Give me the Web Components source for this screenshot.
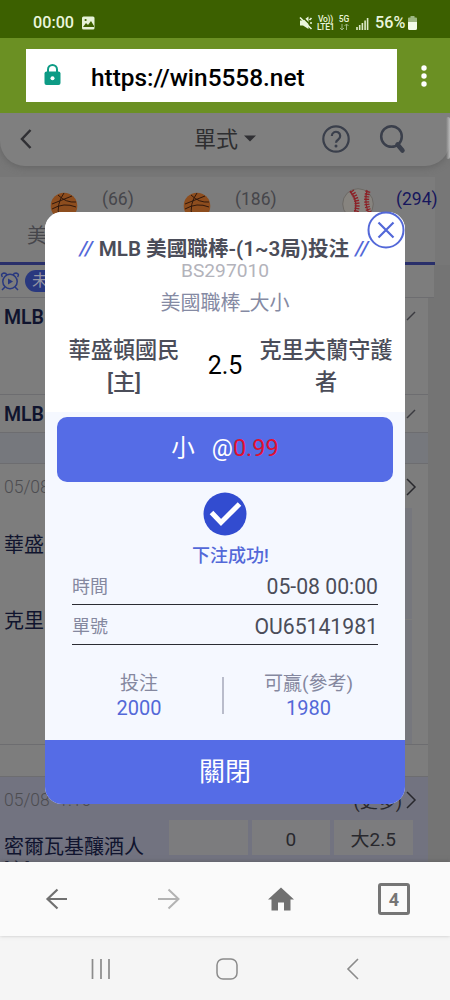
<!DOCTYPE html>
<html lang="zh-Hant">
<head>
<meta charset="utf-8">
<title>win5558</title>
<style>
html,body{margin:0;padding:0}
body{width:450px;height:1000px;overflow:hidden;font-family:Roboto,"Noto Sans CJK TC",sans-serif;background:#f5f5f5}
</style>
</head>
<body>
<phone-screen></phone-screen>
<script>
const base = '*{box-sizing:border-box}svg{display:block;flex:none}';
function define(name, css, html) {
  customElements.define(name, class extends HTMLElement {
    connectedCallback() {
      if (this.shadowRoot) return;
      const t = document.createElement('template');
      t.innerHTML = '<style>' + base + css + '</style>' + html;
      this.attachShadow({mode: 'open'}).append(t.content.cloneNode(true));
    }
  });
}

define('status-bar', `
:host{display:flex;align-items:center;height:38px;padding:8px 33px 0 33px;background:#3c6000;color:#eaf5dc;font-weight:500;font-size:16.2px;line-height:20px;white-space:nowrap}
.time{width:48px}
.right{margin-left:auto;display:flex;align-items:center}
.tiny{font-size:8.5px;line-height:8.5px;text-align:center;font-weight:500}
`, `
<span class="time">00:00</span>
<svg width="14" height="14" viewBox="0 0 14 14"><rect x="1" y=".5" width="12.5" height="13" rx="1.5" fill="#e6f2d8"/><path d="M2 11l3-4 2 2 3-4 3 5v1z" fill="#3c6000"/><circle cx="4.6" cy="4" r="1.1" fill="#3c6000"/></svg>
<div class="right">
<svg width="14" height="14" viewBox="0 0 14 14" style="margin-right:4px"><path d="M1 4.500h3L9.500 .5v12.500L4 9.500H1z" fill="#eaf5dc"/><path d="M2.500 0L14 11.500" stroke="#3c6000" stroke-width="1.600"/><path d="M1 1.500L12.500 13M10.500 4l2-2M11 7H13" stroke="#eaf5dc" stroke-width="1.600"/></svg>
<div class="tiny" style="width:17px;margin-right:4px;letter-spacing:-.3px">Vo))<br>LTE1</div>
<div class="tiny" style="width:12px;margin-right:6px;font-size:8.5px">5G<svg width="12" height="8" viewBox="0 0 12 8"><path d="M4 1v6M2 5l2 2 2-2M8.500 7V1M6.500 3l2-2 2 2" fill="none" stroke="#9eb784" stroke-width="1"/></svg></div>
<svg width="13" height="13" viewBox="0 0 13 13" style="margin-right:6px"><path d="M1 13V10M3.700 13V8M6.400 13V6" stroke="#dcebc9" stroke-width="1.6"/><path d="M9.100 13V3.500M11.600 13V1" stroke="#dcebc9" stroke-width="1.6"/></svg>
<span style="width:30px;margin-right:3px;font-size:16.200px">56%</span>
<svg width="9" height="14" viewBox="0 0 9 14"><path d="M2.500 0h4v1.500H8a1 1 0 0 1 1 1V7H0V2.500a1 1 0 0 1 1-1h1.500z" fill="#9db681"/><path d="M0 6h9v6.500a1.500 1.500 0 0 1-1.500 1.500h-6A1.500 1.500 0 0 1 0 12.500z" fill="#f2fae8"/></svg>
</div>`);

define('address-bar', `
:host{display:flex;align-items:flex-start;height:75px;padding:10.500px 0 0 26px;background:#6b9023}
.box{display:flex;align-items:center;width:371px;height:53.500px;background:#fff;padding-left:18px;font-size:24.400px;font-weight:500;color:#000;white-space:nowrap}
.u{margin-left:30px;padding-top:5px;line-height:30px}
.m{margin:16px 0 0 21px}
`, `
<div class="box"><svg width="17" height="22" viewBox="0 0 17 22"><path d="M4 9V5.500a4.500 4.500 0 0 1 9 0V9" fill="none" stroke="#0d9b85" stroke-width="2"/><rect x=".5" y="7.500" width="16" height="13.500" rx="2" fill="#0d9b85"/><circle cx="8.500" cy="14.300" r="2" fill="#fff"/></svg><span class="u">https://win5558.net</span></div>
<svg class="m" width="12" height="24" viewBox="0 0 12 24"><g fill="#fff"><circle cx="6" cy="3" r="2.700"/><circle cx="6" cy="11" r="2.700"/><circle cx="6" cy="19" r="2.700"/></g></svg>`);

define('page-header', `
:host{display:flex;flex:none;position:relative;align-items:center;height:53px;padding:0 0 2px 19px;background:#7f7f7f;border-radius:0 0 25px 25px;box-shadow:0 2px 6px #666;color:#2e2e30;font-size:22px;white-space:nowrap}
:host::after{content:"";position:absolute;right:0;top:4px;width:4px;height:42px;background:linear-gradient(90deg,#aaa0,#bbb);border-radius:2px}
.t{margin-left:161px;width:45px;line-height:30px;padding-top:2px;flex:none}
`, `
<svg width="14" height="22" viewBox="0 0 14 22"><path d="M11.500 2L3 11l8.500 9" fill="none" stroke="#303034" stroke-width="2.500"/></svg>
<span class="t">單式</span>
<svg width="18" height="10" viewBox="0 0 18 10"><path d="M5 1.500h12l-6 6z" fill="#303034"/></svg>
<svg style="margin-left:64px" width="30" height="30" viewBox="0 0 30 30"><circle cx="15" cy="15" r="12.700" fill="none" stroke="#3a3f4b" stroke-width="2.200"/><path d="M10.800 12a4.200 4.200 0 1 1 6.500 3.500Q15 17 15 18.800" fill="none" stroke="#3a3f4b" stroke-width="2.200"/><circle cx="15" cy="22" r="1.500" fill="#3a3f4b"/></svg>
<svg style="margin-left:28px" width="28" height="30" viewBox="0 0 28 30"><circle cx="12.500" cy="12.500" r="10.300" fill="none" stroke="#3a3f4b" stroke-width="2.500"/><path d="M18.500 20.500l5 6" stroke="#3a3f4b" stroke-width="4.500" stroke-linecap="round"/></svg>`);

const ball = '<svg width="28" height="28" viewBox="0 0 28 28"><circle cx="14" cy="14" r="13.300" fill="#8d4d1e"/><path d="M2 12Q12 8 22 4M8 3Q16 11 26 10M14 1Q6 12 9 25M2 17Q14 10 26 15" fill="none" stroke="#30180c" stroke-width="1"/></svg>';
define('svg-ball', ':host{display:block;width:28px;margin-top:3px;flex:none}', ball);
define('sport-tabs', `
:host{display:block;flex:none;width:435px;height:88px;margin-top:11px;background:#7c7c7c;border-bottom:3px solid #292f6a;padding-top:12px;color:#46464b}
.r{display:flex;height:38px;font-size:17.500px;line-height:20px;padding-left:50px}
.c{padding-left:24px;flex:none}
.l{font-size:20px;line-height:24px;padding:0 0 0 27px;margin-top:-3px}
`, `
<div class="r"><svg-ball></svg-ball><span class="c" style="width:105px">(66)</span><svg-ball></svg-ball><span class="c" style="width:131px">(186)</span>
<svg style="margin-top:-1px" width="32" height="32" viewBox="0 0 32 32"><circle cx="16" cy="16" r="15.300" fill="#87847f" stroke="#6c6965"/><path d="M8 3Q18 15 11 28M25 2Q22 15 27 26" fill="none" stroke="#842228" stroke-width="1.200"/><path d="M9.500 3Q19 15 12.500 28M26 3Q22.500 15 28 26" fill="none" stroke="#8e2026" stroke-width="5" stroke-dasharray="1.300 1.300"/></svg>
<span style="color:#16165c;padding-left:22px">(294)</span></div>
<div class="l">美</div>`);

define('match-list', `
:host{display:block;flex:1;color:#10142e;background:#747474;width:450px}
.w{width:428px;background:#7d7d7d}
.row{display:flex;align-items:center;padding-left:4px;border-bottom:1px solid #6d6d70}
b{font-weight:600;font-size:19.500px;line-height:24px}
.d{color:#4c4c50;font-size:17.500px;font-weight:300}
.pill{width:90px;height:22px;border-radius:11px;background:#29387f;color:#9494a2;font-size:16px;line-height:22px;padding-left:7px;margin-left:4px}
.k{margin-left:auto;margin-right:10px}
.n{font-size:20px;line-height:28px;padding-left:4px}
.cells{display:flex;gap:4px;margin-left:24px}
.cells span{width:78.500px;height:35px;background:#7c7c7e;text-align:center;line-height:39px;font-size:19px;color:#28282d}
`, `
<div class="w row" style="height:33px;padding-left:0;width:434px">
<svg width="21" height="22" viewBox="0 0 21 22"><g fill="none" stroke="#29387f" stroke-width="1.500"><circle cx="10" cy="11.500" r="7.200"/><path d="M2.500 7Q0 4 4 3q2 0 3 2M17.500 7Q20 4 16 3q-2 0-3 2M5 17l-3 3M15 17l3 3"/></g><path d="M8 8.500l5 3-5 3z" fill="#29387f"/></svg>
<span class="pill">未</span></div>
<div class="w row" style="height:97px;align-items:flex-start;padding-top:8px"><b>MLB</b><svg class="k" style="margin-top:5px" width="14" height="12" viewBox="0 0 14 12"><path d="M3 9L11 1" stroke="#3b3b40" stroke-width="1.500"/></svg></div>
<div class="w row" style="height:38px;padding-top:2px"><b>MLB</b><svg class="k" width="14" height="12" viewBox="0 0 14 12"><path d="M3 9L11 1" stroke="#3b3b40" stroke-width="1.500"/></svg></div>
<div class="w row" style="height:31px;background:#76787d"></div>
<div class="w" style="height:281px;border-bottom:1px solid #6d6d70">
<div style="display:flex;align-items:center;height:44px;padding:2px 0 0 4px"><span class="d">05/08</span><svg class="k" width="14" height="18" viewBox="0 0 14 18"><path d="M3 1l8 8-8 8" fill="none" stroke="#28282d" stroke-width="1.500"/></svg></div>
<div style="display:flex"><div style="width:401px"><div class="n" style="padding-top:23px">華盛</div><div class="n" style="padding-top:48px">克里</div></div><div style="width:11px"><div style="height:111px;background:#76777d"></div><div style="height:124px;margin-top:1px;background:#76777d"></div></div></div>
</div>
<div class="w row" style="height:32px"></div>
<div class="w" style="height:85px;background:#727380;overflow:hidden">
<div style="display:flex;align-items:center;height:43px;padding:3px 0 0 4px"><span class="d">05/08&nbsp; 1:10</span><span style="margin-left:auto;font-size:18px;color:#28282d">(更多)</span><svg style="margin:0 10px 0 2px" width="14" height="18" viewBox="0 0 14 18"><path d="M3 1l8 8-8 8" fill="none" stroke="#28282d" stroke-width="1.500"/></svg></div>
<div style="display:flex"><div class="n" style="width:145px;white-space:nowrap;padding-top:15px;line-height:24px">密爾瓦基釀酒人<div style="font-size:17px;line-height:20px">[主]</div></div><div class="cells"><span></span><span>0</span><span>大2.5</span></div></div>
</div>`);

define('bet-dialog', `
:host{display:block;position:absolute;left:45px;top:212px;width:360px;height:592px;border-radius:17px;background:#f5f8ff;color:#4b4d59;text-align:center;white-space:nowrap}
.top{background:#fff;height:200px;border-radius:17px 17px 0 0;padding-top:23px}
.title{display:flex;justify-content:center;gap:6px;font-size:20.600px;font-weight:600;line-height:29px;height:27px;padding-right:2px}
.title i{color:#5368d8;font-weight:500}
.id{font-size:19.200px;line-height:20px;color:#b3b3bb;height:20px;margin-top:-1px}
.sub{font-size:20px;line-height:28px;color:#858aa3;margin-top:8px}
.teams{display:flex;margin-top:17px;font-size:22.200px;font-weight:500;line-height:32px;align-items:center}
.teams div{width:158px}
.teams span{width:44px;font-size:25px;font-weight:400;color:#000}
.pick{display:flex;justify-content:center;margin:4.500px 12px 0;height:65.500px;border-radius:10px;background:#556ce6;color:#fff;font-size:23.500px;line-height:63px;gap:17px}
.pick em{font-style:normal;color:#e01030}
.ok{margin:10px auto 0}
.msg{color:#5368d8;font-size:18px;font-weight:500;line-height:24px;height:24px;margin-top:8px;padding-left:11px}
.rows{margin:-3px 27px 0}
.rows div{display:flex;justify-content:space-between;align-items:center;border-bottom:1.500px solid #2b2c33;height:40px;font-size:21.200px;line-height:30px;padding-top:5px}
.rows label{font-size:18px;color:#85889f}
.rows span{margin-top:-1px}
.stats{display:flex;margin-top:26px;height:69px;line-height:26px;font-size:19px;color:#85889f}
.stats p{margin:-1px 0 0;font-size:20px;line-height:24px;color:#5368d8}
.stats hr{width:2px;height:37px;background:#b9bccb;border:0;margin:6px 0 0}
.foot{height:64px;background:#556ce6;border-radius:0 0 17px 17px;color:#fff;font-size:26px;line-height:65px}
.x{position:absolute;left:322px;top:-1px}
`, `
<div class="top"><div class="title"><i>//</i><span>MLB 美國職棒-(1~3局)投注</span><i>//</i></div>
<div class="id">BS297010</div><div class="sub">美國職棒_大小</div>
<div class="teams"><div>華盛頓國民<br>[主]</div><span>2.5</span><div>克里夫蘭守護<br>者</div></div></div>
<div class="pick"><span>小</span><span>@<em>0.99</em></span></div>
<svg class="ok" width="44" height="44" viewBox="0 0 44 44"><circle cx="22" cy="22" r="21.500" fill="#324cd0"/><path d="M8.500 20.500l9.500 10L36.500 12" fill="none" stroke="#fff" stroke-width="5"/></svg>
<div class="msg">下注成功!</div>
<div class="rows"><div><label>時間</label><span>05-08 00:00</span></div><div><label>單號</label><span>OU65141981</span></div></div>
<div class="stats"><div style="width:177px;padding-left:11px">投注<p>2000</p></div><hr><div style="width:181px;padding-right:14px;padding-left:2px">可贏(參考)<p>1980</p></div></div>
<div class="foot">關閉</div>
<svg class="x" width="38" height="38" viewBox="0 0 38 38"><circle cx="19" cy="19" r="17.500" fill="#fff" stroke="#5368d8" stroke-width="2"/><path d="M11.500 11.500l15 15M26.500 11.500l-15 15" stroke="#5368d8" stroke-width="2.200"/></svg>`);

define('page-view', `
:host{display:block;height:749px;background:#757575}
.edge{height:749px;display:flex;flex-direction:column;overflow:hidden;background:#777}
`, `<div class="edge"><page-header></page-header><sport-tabs></sport-tabs><match-list></match-list></div>`);

define('browser-nav', `
:host{display:flex;align-items:center;height:74px;background:#fafafa;padding:0 0 0 45px;position:relative;box-shadow:0 -1px 4px #5558}
.n{width:32px;height:32px;border:3px solid #757575;border-radius:3px;text-align:center;font-size:18px;font-weight:700;line-height:27px;color:#757575;margin-left:83px}
`, `
<svg width="24" height="24" viewBox="0 0 24 24"><path d="M22 12H3M12.500 2.500L2.500 12l10 9.500" fill="none" stroke="#707070" stroke-width="2.200"/></svg>
<svg style="margin-left:88px" width="24" height="24" viewBox="0 0 24 24"><path d="M1 12h20M11.500 2.500l10 9.500-10 9.500" fill="none" stroke="#b3b3b3" stroke-width="2"/></svg>
<svg style="margin-left:86px" width="28" height="26" viewBox="0 0 28 26"><path d="M14 1.500l13 12h-3.500v11H17v-8h-6v8H4.500v-11H1z" fill="#707070"/></svg>
<div class="n">4</div>`);

define('system-nav', `
:host{display:flex;align-items:center;height:64px;background:#f5f5f5;padding:2px 0 0 90px}
`, `
<svg width="22" height="22" viewBox="0 0 22 22"><path d="M2.500 1v20M11 1v20M19 1v20" stroke="#8b8b8b" stroke-width="1.700"/></svg>
<svg style="margin-left:104px" width="22" height="22" viewBox="0 0 22 22"><rect x="1" y="1" width="20" height="20" rx="6" fill="none" stroke="#8b8b8b" stroke-width="1.500"/></svg>
<svg style="margin-left:107px" width="16" height="22" viewBox="0 0 16 22"><path d="M13 1L3 11l10 10" fill="none" stroke="#8b8b8b" stroke-width="1.600"/></svg>`);

define('phone-screen', ':host{display:block;position:relative;width:450px;height:1000px;overflow:hidden}',
`<status-bar></status-bar><address-bar></address-bar><page-view></page-view><browser-nav></browser-nav><system-nav></system-nav><bet-dialog></bet-dialog>`);
</script>
</body>
</html>
